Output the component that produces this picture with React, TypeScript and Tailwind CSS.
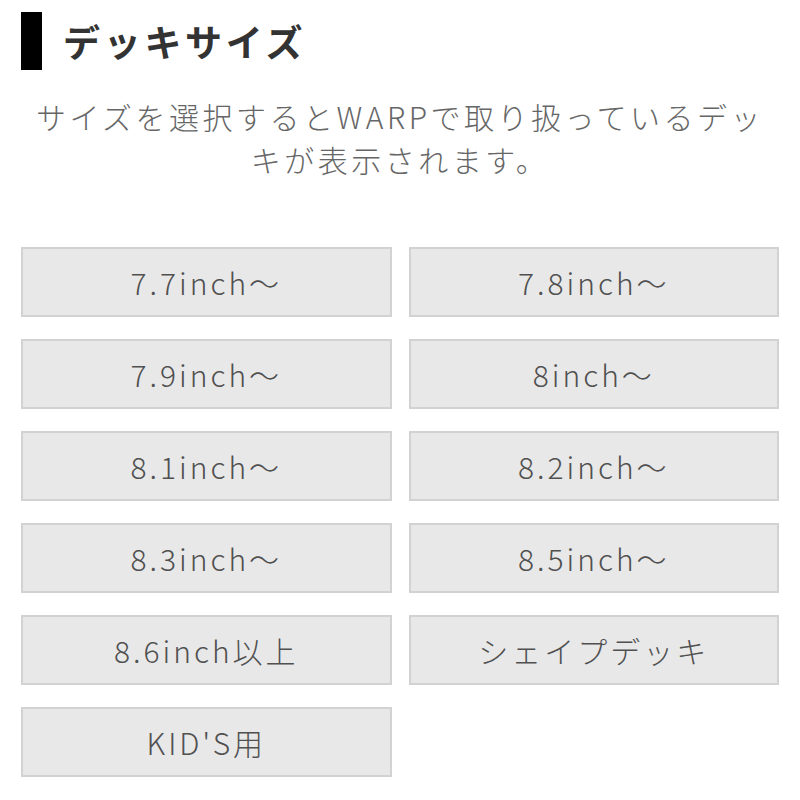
const SIZES = [
  "7.7inch〜",
  "7.8inch〜",
  "7.9inch〜",
  "8inch〜",
  "8.1inch〜",
  "8.2inch〜",
  "8.3inch〜",
  "8.5inch〜",
  "8.6inch以上",
  "シェイプデッキ",
  "KID'S用",
];

export default function App() {
  return (
    <div
      className="w-[800px] h-[800px] bg-white px-[21px] pt-[12px]"
      style={{ fontFamily: '"Noto Sans CJK JP", "Noto Sans", sans-serif' }}
    >
      {/* Heading */}
      <div className="flex items-center h-[58px]">
        <div className="w-[21px] h-[58px] bg-black" />
        <h2 className="ml-[21px] text-[37px] font-bold tracking-[0.1em] text-[#333] leading-none">
          デッキサイズ
        </h2>
      </div>

      {/* Description */}
      <p className="mt-[25px] px-[9px] text-center text-[30px] font-light tracking-[3.5px] leading-[43px] text-[#666]">
        サイズを選択するとWARPで取り扱っているデッキが表示されます。
      </p>

      {/* Size buttons */}
      <div className="mt-[66px] grid grid-cols-2 gap-x-[17px] gap-y-[22px]">
        {SIZES.map(s => (
          <button
            key={s}
            className="h-[70px] bg-[#e8e8e8] border-2 border-[#d2d2d2] text-[30px] font-light tracking-[0.1em] text-[#505050] flex items-center justify-center"
          >
            {s}
          </button>
        ))}
      </div>
    </div>
  );
}
